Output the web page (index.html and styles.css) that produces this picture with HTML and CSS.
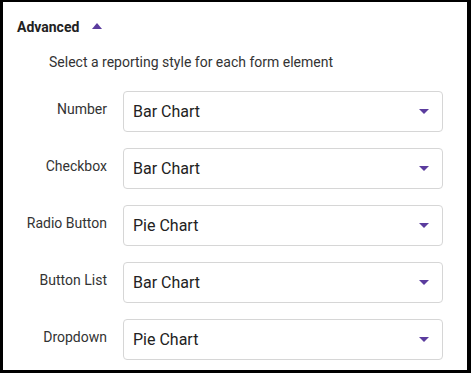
FILE: index.html
```html
<!DOCTYPE html>
<html lang="en">
<head>
    <meta charset="UTF-8">
    <title>Advanced reporting</title>
    <link rel="stylesheet" href="styles.css">
</head>
<body>
    <div class="panel">
        <div class="section-head">
            <span class="section-title">Advanced</span>
            <svg class="caret-up" width="10" height="6" viewBox="0 0 10 6"><path d="M0 6 L5 0 L10 6 Z" fill="#5b3c9e"/></svg>
        </div>
        <p class="hint">Select a reporting style for each form element</p>

        <div class="field-row">
            <span class="field-label">Number</span>
            <div class="select-box"><span>Bar Chart</span><svg class="caret" width="10" height="5" viewBox="0 0 10 5"><path d="M0 0 L10 0 L5 5 Z" fill="#5b3c9e"/></svg></div>
        </div>
        <div class="field-row">
            <span class="field-label">Checkbox</span>
            <div class="select-box"><span>Bar Chart</span><svg class="caret" width="10" height="5" viewBox="0 0 10 5"><path d="M0 0 L10 0 L5 5 Z" fill="#5b3c9e"/></svg></div>
        </div>
        <div class="field-row">
            <span class="field-label">Radio Button</span>
            <div class="select-box"><span>Pie Chart</span><svg class="caret" width="10" height="5" viewBox="0 0 10 5"><path d="M0 0 L10 0 L5 5 Z" fill="#5b3c9e"/></svg></div>
        </div>
        <div class="field-row">
            <span class="field-label">Button List</span>
            <div class="select-box"><span>Bar Chart</span><svg class="caret" width="10" height="5" viewBox="0 0 10 5"><path d="M0 0 L10 0 L5 5 Z" fill="#5b3c9e"/></svg></div>
        </div>
        <div class="field-row">
            <span class="field-label">Dropdown</span>
            <div class="select-box"><span>Pie Chart</span><svg class="caret" width="10" height="5" viewBox="0 0 10 5"><path d="M0 0 L10 0 L5 5 Z" fill="#5b3c9e"/></svg></div>
        </div>
    </div>
</body>
</html>
```

FILE: styles.css
```css
html, body { margin: 0; padding: 0; background: #fff; }
body { font-family: Roboto, "Liberation Sans", sans-serif; color: #333; }
.panel { box-sizing: border-box; width: 471px; height: 373px; border-style: solid; border-color: #000; border-width: 2px 4px 3px 3px; padding: 15px 24px 0 14px; background: #fff; }
.section-head { display: flex; align-items: center; gap: 13px; height: 20px; }
.section-title { font-size: 14px; font-weight: 700; color: #222; line-height: 20px; }
.caret-up { margin-top: -3px; }
.hint { margin: 15px 0 0 32px; font-size: 14px; line-height: 20px; color: #333; }
.field-row { display: flex; align-items: center; gap: 16px; margin-top: 16px; }
.hint + .field-row { margin-top: 19px; }
.field-label { width: 90px; flex: none; text-align: right; font-size: 14px; color: #333; padding-bottom: 6px; }
.select-box { flex: 1; box-sizing: border-box; height: 41px; border: 1px solid #d6d6d6; border-radius: 4px; display: flex; align-items: center; justify-content: space-between; padding: 0 13px 0 9px; font-size: 16px; color: #222; }
```
